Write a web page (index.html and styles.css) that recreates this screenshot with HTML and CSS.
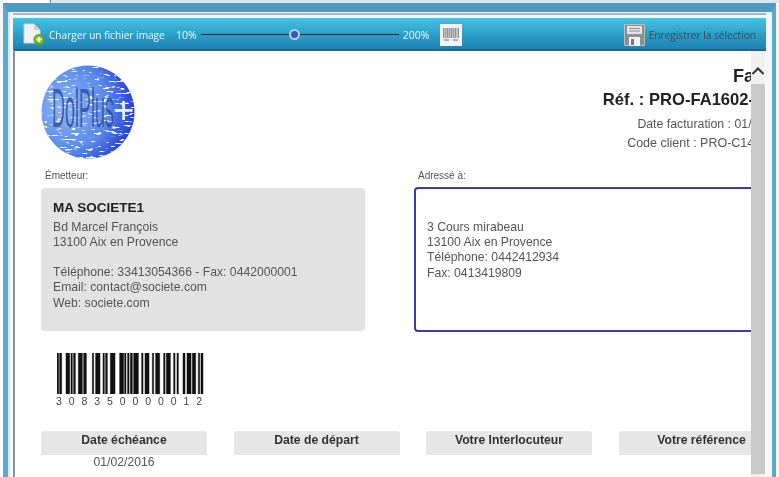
FILE: index.html
```html
<!DOCTYPE html>
<html lang="fr">
<head>
    <meta charset="UTF-8">
    <link rel="stylesheet" href="styles.css">
    <title>Facture</title>
</head>
<body>
    <div class="topStrip"></div>
    <div class="frame">
        <div class="panel">
            <div class="toolbar">
                <svg class="fileIcon" width="22" height="23" viewBox="0 0 22 23">
                    <path d="M1 1H11L17 7V20H1Z" fill="#f1f1f1" stroke="#c9d3d8"/>
                    <path d="M11 1V7H17Z" fill="#cfcfcf"/>
                    <circle cx="16" cy="16.5" r="5.5" fill="#5da821"/>
                    <circle cx="16" cy="16.5" r="3.6" fill="#8ccb3d"/>
                    <path d="M13.5 16.5H18.5M16 14V19" stroke="#fff" stroke-width="1.6"/>
                </svg>
                <span class="toolText loadText">Charger un fichier image</span>
                <span class="toolText pct">10%</span>
                <div class="slider"><div class="thumb"></div></div>
                <span class="toolText pct">200%</span>
                <div class="barcodeBtn">
                    <svg width="16" height="15" viewBox="0 0 16 15">
                        <path d="M0.500 1V11M2 1V11M3 1V11M4.500 1V11M6 1V11M7 1V11M8.500 1V11M10 1V11M11 1V11M12.500 1V11M14 1V11M15.500 1V11" stroke="#666" stroke-width="0.7"/>
                        <path d="M1 13H6M10 13H15" stroke="#999" stroke-width="1.5"/>
                    </svg>
                </div>
                <svg class="saveIcon" width="21" height="22" viewBox="0 0 21 22">
                    <path d="M0.500 0.500H20.500V21.500H0.500Z" fill="#8a8f92" stroke="#b9bdc0"/>
                    <rect x="3" y="2" width="15" height="8" fill="#e4e4e4"/>
                    <path d="M5 4.500H16M5 7H16" stroke="#8d8d8d"/>
                    <rect x="5" y="13" width="11" height="9" fill="#f4f4f4"/>
                    <rect x="7" y="15" width="3" height="6" fill="#777"/>
                </svg>
                <span class="toolText saveText">Enregistrer la sélection</span>
            </div>
            <div class="viewport">
                <div class="doc">
                    <div class="docHeader">
                        <svg class="logo" width="94" height="94" viewBox="0 0 94 94">
                            <defs>
                                <radialGradient id="logoGrad" cx="0.25" cy="0.45" r="0.85">
                                    <stop offset="0" stop-color="#8db4f2"/>
                                    <stop offset="0.55" stop-color="#5a8aea"/>
                                    <stop offset="1" stop-color="#1222cc"/>
                                </radialGradient>
                                <filter id="flecks" x="0" y="0" width="100%" height="100%">
                                    <feTurbulence type="fractalNoise" baseFrequency="0.13 0.5" numOctaves="2" seed="6"/>
                                    <feColorMatrix values="0 0 0 0 1  0 0 0 0 1  0 0 0 0 1  3 9 0 0 -7"/>
                                </filter>
                                <clipPath id="logoClip"><circle cx="47" cy="47" r="46.500"/></clipPath>
                            </defs>
                            <circle cx="47" cy="47" r="46.500" fill="url(#logoGrad)"/>
                            <rect width="94" height="94" filter="url(#flecks)" clip-path="url(#logoClip)"/>
                            <text class="logoName" transform="translate(11 62) scale(0.9 2.8)">DolPlus</text>
                            <text class="logoPlus" transform="translate(72 58) scale(1.4 1.5)">+</text>
                        </svg>
                        <div class="docTitle">
                            <div class="titleMain">Facture</div>
                            <div class="titleRef">Réf. : PRO-FA1602-0001</div>
                            <div class="titleInfo">Date facturation : 01/01/2016</div>
                            <div class="titleInfo titleCode">Code client : PRO-C14000001</div>
                        </div>
                    </div>
                    <div class="parties">
                        <div class="sender">
                            <div class="partyLabel">Émetteur:</div>
                            <div class="senderBox">
                                <div class="senderName">MA SOCIETE1</div>
                                <div>Bd Marcel François</div>
                                <div>13100 Aix en Provence</div>
                                <br>
                                <div>Téléphone: 33413054366 - Fax: 0442000001</div>
                                <div>Email: contact@societe.com</div>
                                <div>Web: societe.com</div>
                            </div>
                        </div>
                        <div class="recipient">
                            <div class="partyLabel">Adressé à:</div>
                            <div class="recipientBox">
                                <div>3 Cours mirabeau</div>
                                <div>13100 Aix en Provence</div>
                                <div>Téléphone: 0442412934</div>
                                <div>Fax: 0413419809</div>
                            </div>
                        </div>
                    </div>
                    <svg class="barcode" width="147" height="41" viewBox="80 40 441 123" preserveAspectRatio="none">
                        <path d="M80 40h5v123h-5zM88 40h6v123h-6zM107 40h11v123h-11zM122 40h4v123h-4zM130 40h5v123h-5zM144 40h12v123h-12zM160 40h8v123h-8zM186 40h4v123h-4zM196 40h13v123h-13zM218 40h4v123h-4zM226 40h5v123h-5zM240 40h14v123h-14zM268 40h12v123h-12zM283 40h4v123h-4zM292 40h4v123h-4zM300 40h6v123h-6zM310 40h14v123h-14zM334 40h4v123h-4zM344 40h12v123h-12zM366 40h4v123h-4zM376 40h12v123h-12zM400 40h4v123h-4zM408 40h12v123h-12zM430 40h4v123h-4zM440 40h4v123h-4zM458 40h6v123h-6zM470 40h12v123h-12zM486 40h10v123h-10zM504 40h4v123h-4zM512 40h6v123h-6z" fill="#111" stroke="#111" stroke-width="1.500"/>
                    </svg>
                    <div class="barcodeNum">308350000012</div>
                    <div class="infoCols">
                        <div class="infoCol">
                            <div class="infoHead">Date échéance</div>
                            <div class="infoValue">01/02/2016</div>
                        </div>
                        <div class="infoCol">
                            <div class="infoHead">Date de départ</div>
                        </div>
                        <div class="infoCol">
                            <div class="infoHead">Votre Interlocuteur</div>
                        </div>
                        <div class="infoCol">
                            <div class="infoHead">Votre référence</div>
                        </div>
                    </div>
                </div>
                <div class="scrollbar">
                    <svg class="scrollUp" width="14" height="10" viewBox="0 0 14 10">
                        <path d="M1.500 8L7 2.500L12.500 8" fill="none" stroke="#333" stroke-width="2"/>
                    </svg>
                    <div class="scrollThumb"></div>
                </div>
            </div>
        </div>
    </div>
</body>
</html>
```

FILE: styles.css
```css
html, body {
    margin: 0;
    padding: 0;
    width: 779px;
    height: 477px;
    overflow: hidden;
    font-family: "Liberation Sans", Arial, sans-serif;
    background-color: #f4f9fb;
}
.topStrip {
    height: 3px;
    background: linear-gradient(to right, #fff 50px, #4f9fc6 50px, #4f9fc6 51px, #d6e9f3 51px);
}
.frame {
    height: 474px;
    margin: 0 3px;
    border-top: 9px solid #4a9cc4;
    border-left: 5px solid #5aaad0;
    border-right: 4px solid #5aaad0;
    box-sizing: border-box;
    padding: 1px 4px 0 5px;
    background: linear-gradient(to right, #d5e8f2 2px, #f2f7fa 2px);
    display: flex;
}
.panel {
    flex: 1;
    display: flex;
    flex-direction: column;
    min-width: 0;
    border-top: 2px solid #a9b4ba;
    padding-top: 3px;
    margin-right: 2px;
    filter: blur(0.3px);
}
.toolbar {
    height: 31px;
    flex: none;
    display: flex;
    align-items: center;
    box-sizing: border-box;
    padding: 2px 10px 0;
    background: linear-gradient(to bottom, #47c3e0, #2b9dc9 55%, #1f82b4);
}
.fileIcon {
    flex: none;
}
.toolText {
    font-family: "Open Sans", sans-serif;
    font-size: 10.500px;
    color: #f2f8fb;
    white-space: nowrap;
}
.loadText {
    font-size: 10.100px;
    margin-left: 4px;
    width: 127px;
}
.slider {
    position: relative;
    width: 198px;
    height: 1px;
    margin: 0 4px;
    background-color: #0d2c3e;
}
.thumb {
    position: absolute;
    left: 88px;
    top: -5px;
    width: 7px;
    height: 7px;
    border: 2px solid #b9cfe0;
    border-radius: 50%;
    background-color: #2f5fb0;
}
.barcodeBtn {
    width: 22px;
    height: 22px;
    margin-left: 11px;
    flex: none;
    display: flex;
    align-items: center;
    justify-content: center;
    background-color: #f3f3f3;
}
.saveIcon {
    margin-left: auto;
    flex: none;
}
.saveText {
    font-size: 10.100px;
    margin-left: 4px;
    color: #3b4a52;
}
.viewport {
    flex: 1;
    min-height: 0;
    display: flex;
    border-top: 2px solid #3f5b6b;
    border-left: 2px solid #8b8f92;
    background-color: #fff;
}
.doc {
    flex: 1;
    min-width: 0;
    overflow: hidden;
    padding-left: 26px;
    color: #555;
    font-size: 12.200px;
}
.docHeader {
    width: 755px;
    height: 104px;
    padding-top: 14px;
    display: flex;
    justify-content: space-between;
    align-items: flex-start;
}
.logo {
    flex: none;
}
.logoName {
    font-size: 20px;
    fill: #2d4a9c;
    fill-opacity: 0.8;
}
.logoPlus {
    font-size: 26px;
    fill: #eef2fd;
}
.docTitle {
    text-align: right;
    white-space: nowrap;
    margin-top: -1px;
}
.titleMain {
    font-size: 18px;
    font-weight: bold;
    color: #222;
    line-height: 25px;
    margin-right: -2px;
}
.titleRef {
    font-size: 16.600px;
    font-weight: bold;
    color: #222;
    line-height: 22px;
    margin-bottom: 4px;
    padding-right: 5px;
}
.titleInfo {
    line-height: 19px;
    font-size: 12.300px;
}
.titleCode {
    font-size: 12.500px;
}
.parties {
    display: flex;
    width: 755px;
    gap: 49px;
}
.sender {
    width: 324px;
    flex: none;
}
.recipient {
    flex: 1;
}
.partyLabel {
    font-size: 10px;
    line-height: 13px;
    margin-bottom: 6px;
    padding-left: 4px;
}
.senderBox {
    height: 143px;
    box-sizing: border-box;
    padding: 8px 12px;
    background-color: #e2e2e2;
    border-radius: 4px;
    line-height: 15.200px;
}
.senderName {
    font-size: 13.500px;
    font-weight: bold;
    color: #222;
    line-height: 23.500px;
}
.recipientBox {
    height: 145px;
    margin-top: -1px;
    box-sizing: border-box;
    padding: 31px 11px 0;
    border: 2px solid #3a3ab8;
    border-radius: 4px;
    line-height: 15.200px;
}
.barcode {
    display: block;
    margin: 21px 0 0 16px;
}
.barcodeNum {
    font-size: 10.500px;
    line-height: 12px;
    letter-spacing: 6.900px;
    margin: 1px 0 0 15px;
    color: #444;
}
.infoCols {
    display: grid;
    grid-template-columns: repeat(4, 166px);
    gap: 26.500px;
    margin-top: 24px;
}
.infoHead {
    height: 24px;
    box-sizing: border-box;
    padding-top: 2px;
    background-color: #e6e6e6;
    border-radius: 3px 3px 0 0;
    text-align: center;
    font-weight: bold;
    color: #333;
    line-height: 15px;
}
.infoValue {
    text-align: center;
    line-height: 15px;
}
.scrollbar {
    flex: none;
    width: 14px;
    margin-right: 1px;
    padding: 0 0 3px;
    box-sizing: border-box;
    display: flex;
    flex-direction: column;
    background-color: #f0f0f0;
}
.scrollUp {
    margin-top: 15px;
    flex: none;
}
.scrollThumb {
    flex: 1;
    margin-top: 8px;
    background-color: #c9c9c9;
}
```
